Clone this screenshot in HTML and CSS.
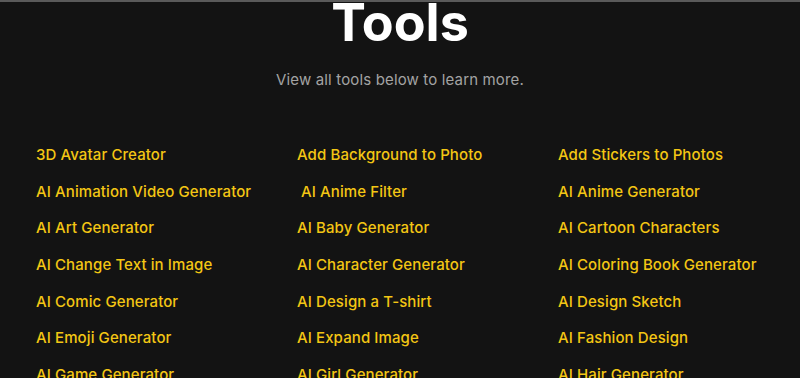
FILE: index.html
```html
<!DOCTYPE html>
<html lang="en">
<head>
<meta charset="utf-8">
<link rel="stylesheet" href="styles.css">
</head>
<body>
<div class="page">
  <header class="hero">
    <h1 class="title">Tools</h1>
    <p class="subtitle">View all tools below to learn more.</p>
  </header>
  <ul class="tools">
    <li><a href="#">3D Avatar Creator</a></li>
    <li><a href="#">Add Background to Photo</a></li>
    <li><a href="#">Add Stickers to Photos</a></li>
    <li><a href="#">AI Animation Video Generator</a></li>
    <li><a href="#" class="indent">AI Anime Filter</a></li>
    <li><a href="#">AI Anime Generator</a></li>
    <li><a href="#">AI Art Generator</a></li>
    <li><a href="#">AI Baby Generator</a></li>
    <li><a href="#">AI Cartoon Characters</a></li>
    <li><a href="#">AI Change Text in Image</a></li>
    <li><a href="#">AI Character Generator</a></li>
    <li><a href="#">AI Coloring Book Generator</a></li>
    <li><a href="#">AI Comic Generator</a></li>
    <li><a href="#">AI Design a T-shirt</a></li>
    <li><a href="#">AI Design Sketch</a></li>
    <li><a href="#">AI Emoji Generator</a></li>
    <li><a href="#">AI Expand Image</a></li>
    <li><a href="#">AI Fashion Design</a></li>
    <li><a href="#">AI Game Generator</a></li>
    <li><a href="#">AI Girl Generator</a></li>
    <li><a href="#">AI Hair Generator</a></li>
  </ul>
</div>
</body>
</html>
```

FILE: styles.css
```css
html, body {
  margin: 0;
  padding: 0;
  background: #131313;
  overflow: hidden;
}
body {
  font-family: Inter, "Noto Sans", sans-serif;
  border-top: 2px solid #5a5a5a;
}
.page {
  height: 376px;
  overflow: hidden;
}
.hero {
  text-align: center;
}
.title {
  margin: -10px 0 0;
  font-size: 52px;
  font-weight: 700;
  line-height: 62px;
  color: #ffffff;
}
.subtitle {
  margin: 15px 0 0;
  font-size: 15px;
  line-height: 22px;
  letter-spacing: 0.15px;
  color: #a3a3a3;
}
.tools {
  list-style: none;
  margin: 53px 0 0;
  padding: 0 0 0 36px;
  display: grid;
  grid-template-columns: 261px 261px 240px;
  row-gap: 14.7px;
}
.tools li {
  font-size: 15px;
  line-height: 22px;
  letter-spacing: 0.1px;
}
.tools a {
  color: #f3c614;
  text-decoration: none;
  font-weight: 500;
}
.tools a.indent {
  margin-left: 4px;
}
```
